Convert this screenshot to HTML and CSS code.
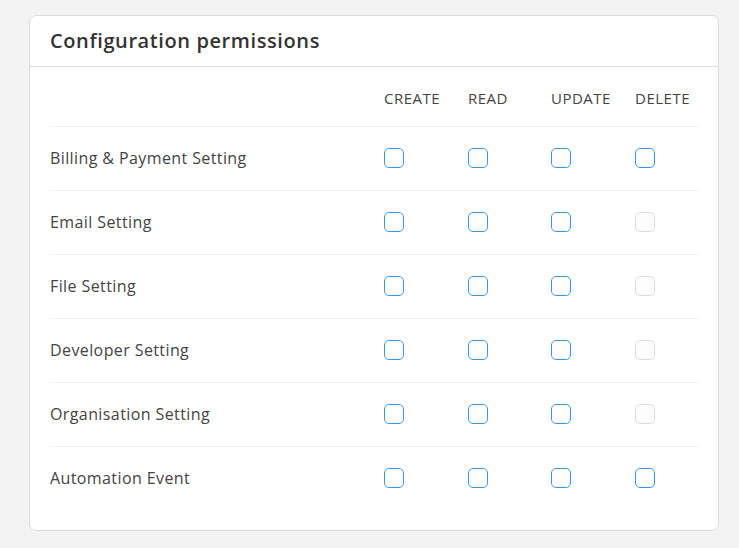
FILE: index.html
```html
<!DOCTYPE html>
<html>
<head>
<meta charset="utf-8">
<link rel="stylesheet" href="styles.css">
</head>
<body>
<div class="card">
  <div class="card-header"><h2>Configuration permissions</h2></div>
  <div class="card-body">
    <div class="row head">
      <div></div>
      <div class="col">CREATE</div>
      <div class="col">READ</div>
      <div class="col">UPDATE</div>
      <div class="col">DELETE</div>
    </div>
    <div class="row">
      <div class="label">Billing &amp; Payment Setting</div>
      <div class="col"><span class="cb"></span></div>
      <div class="col"><span class="cb"></span></div>
      <div class="col"><span class="cb"></span></div>
      <div class="col"><span class="cb"></span></div>
    </div>
    <div class="row">
      <div class="label">Email Setting</div>
      <div class="col"><span class="cb"></span></div>
      <div class="col"><span class="cb"></span></div>
      <div class="col"><span class="cb"></span></div>
      <div class="col"><span class="cb disabled"></span></div>
    </div>
    <div class="row">
      <div class="label">File Setting</div>
      <div class="col"><span class="cb"></span></div>
      <div class="col"><span class="cb"></span></div>
      <div class="col"><span class="cb"></span></div>
      <div class="col"><span class="cb disabled"></span></div>
    </div>
    <div class="row">
      <div class="label">Developer Setting</div>
      <div class="col"><span class="cb"></span></div>
      <div class="col"><span class="cb"></span></div>
      <div class="col"><span class="cb"></span></div>
      <div class="col"><span class="cb disabled"></span></div>
    </div>
    <div class="row">
      <div class="label">Organisation Setting</div>
      <div class="col"><span class="cb"></span></div>
      <div class="col"><span class="cb"></span></div>
      <div class="col"><span class="cb"></span></div>
      <div class="col"><span class="cb disabled"></span></div>
    </div>
    <div class="row">
      <div class="label">Automation Event</div>
      <div class="col"><span class="cb"></span></div>
      <div class="col"><span class="cb"></span></div>
      <div class="col"><span class="cb"></span></div>
      <div class="col"><span class="cb"></span></div>
    </div>
  </div>
</div>
</body>
</html>
```
FILE: styles.css
```css
html, body {
  margin: 0;
  padding: 0;
  background: #f3f3f3;
}
body {
  padding: 15px 20px 0 29px;
  font-family: "Open Sans", "Liberation Sans", sans-serif;
  color: #444;
}
.card {
  width: 690px;
  height: 516px;
  box-sizing: border-box;
  background: #fff;
  border: 1px solid #dcdcdc;
  border-radius: 7px;
}
.card-header {
  height: 51px;
  box-sizing: border-box;
  border-bottom: 1px solid #dedede;
  padding: 0 20px 1px;
  display: flex;
  align-items: center;
}
.card-header h2 {
  margin: 0;
  font-size: 20px;
  font-weight: 600;
  color: #333;
  letter-spacing: 0.6px;
}
.card-body {
  padding: 0 20px;
}
.row {
  display: grid;
  grid-template-columns: 334px 84px 83px 84px 1fr;
  height: 64px;
  align-items: center;
  border-top: 1px solid #efefef;
  box-sizing: border-box;
}
.row.head {
  height: 59px;
  border-top: none;
  font-size: 15px;
  letter-spacing: 0.5px;
  color: #444;
  padding-top: 3px;
}
.label {
  font-size: 16px;
  letter-spacing: 0.4px;
  color: #444;
  padding-bottom: 2px;
}
.col {
  display: flex;
  align-items: center;
}
.row:not(.head) .col {
  padding-bottom: 2px;
}
.cb {
  display: block;
  width: 20px;
  height: 20px;
  box-sizing: border-box;
  border: 1.5px solid #3697f0;
  border-radius: 5px;
  background: #fff;
}
.cb.disabled {
  border: 1px solid #dcdcdc;
  background: #fdfdfd;
}
```
